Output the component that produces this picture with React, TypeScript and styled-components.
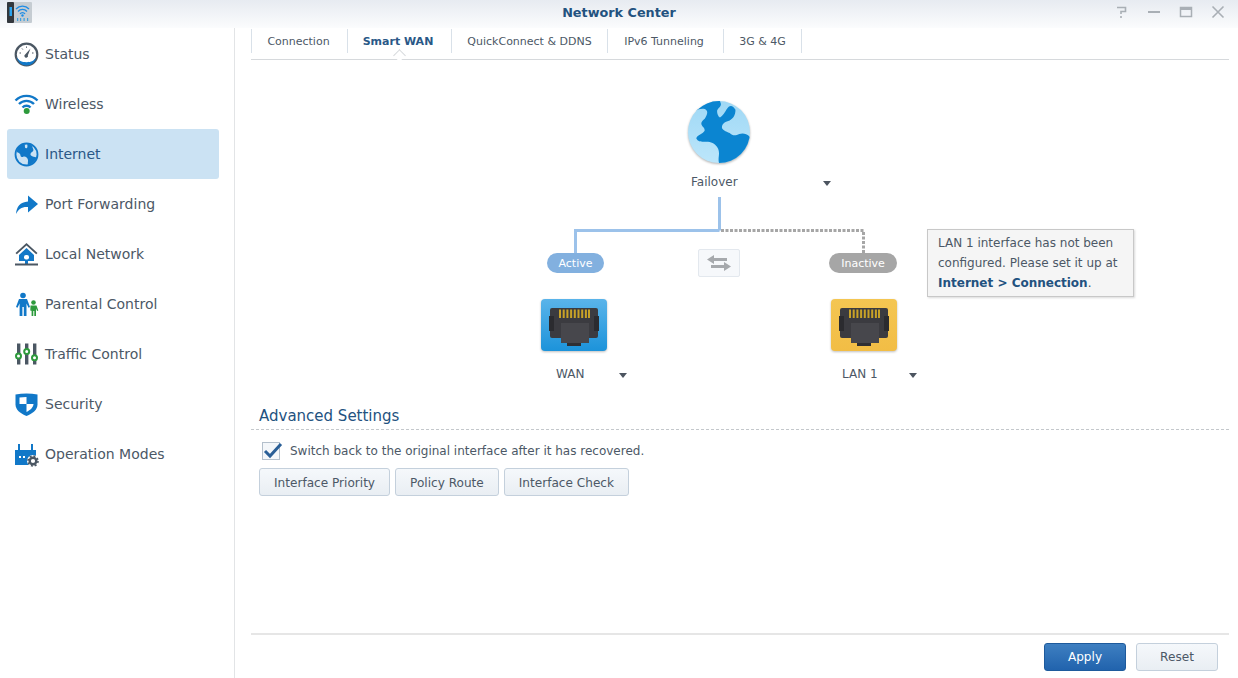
import React from 'react';
import styled, { createGlobalStyle, css } from 'styled-components';

const GlobalStyle = createGlobalStyle`
  html, body {
    margin: 0;
    height: 100%;
    overflow: hidden;
    background: #fff;
  }
  body {
    font-family: "DejaVu Sans", Verdana, sans-serif;
    color: #4c5866;
  }
`;

const Window = styled.div`
  display: flex;
  flex-direction: column;
  width: 1238px;
  height: 678px;
  background: #fff;
`;

const TitleBar = styled.header`
  position: relative;
  display: flex;
  align-items: center;
  justify-content: center;
  flex: none;
  height: 28px;
  background: linear-gradient(#e7ebf1, #fbfcfd);
`;

const AppIcon = styled.svg`
  position: absolute;
  left: 7px;
  top: 2px;
`;

const Title = styled.h1`
  margin: -4px 0 0;
  font-size: 12.8px;
  font-weight: 700;
  color: #23527f;
`;

const WindowControls = styled.div`
  position: absolute;
  right: 13px;
  top: 5px;
  display: flex;
  gap: 18px;
`;

const Body = styled.div`
  display: flex;
  flex: 1;
  min-height: 0;
`;

const Sidebar = styled.nav`
  flex: none;
  width: 235px;
  padding: 1px 15px 0 7px;
  box-sizing: border-box;
  border-right: 1px solid #e2e4e6;
`;

const SideItem = styled.a<{ $active?: boolean }>`
  display: flex;
  align-items: center;
  gap: 6px;
  height: 50px;
  padding-left: 7px;
  border-radius: 3px;
  font-size: 14px;
  color: #4c5866;
  ${(p) =>
    p.$active &&
    css`
      background: #cbe2f3;
      color: #2a5887;
    `}
`;

const SideIcon = styled.svg`
  flex: none;
  width: 25px;
  height: 25px;
`;

const Main = styled.main`
  display: flex;
  flex: 1;
  flex-direction: column;
  min-width: 0;
  padding: 1px 9px 0 16px;
`;

const Tabs = styled.div`
  display: flex;
  flex: none;
  height: 30px;
  border-bottom: 1px solid #d6d9dc;
`;

const Tab = styled.div<{ $width: number; $nudge: number; $active?: boolean }>`
  position: relative;
  display: flex;
  align-items: center;
  justify-content: center;
  width: ${(p) => p.$width}px;
  height: 24px;
  padding-right: ${(p) => p.$nudge}px;
  box-sizing: border-box;
  border-left: 1px solid #d9e1e9;
  font-size: 11px;
  color: ${(p) => (p.$active ? '#2a5887' : '#4c5866')};
  font-weight: ${(p) => (p.$active ? 700 : 400)};
  &:last-child {
    width: ${(p) => p.$width + 1}px;
    border-right: 1px solid #d9e1e9;
  }
  ${(p) =>
    p.$active &&
    css`
      &::after {
        content: '';
        position: absolute;
        left: 50%;
        bottom: -7px;
        width: 8px;
        height: 8px;
        margin-left: -5px;
        background: #fff;
        border-left: 1px solid #d6d9dc;
        border-top: 1px solid #d6d9dc;
        transform: rotate(45deg);
      }
    `}
`;

const Diagram = styled.section`
  position: relative;
  flex: none;
  height: 346px;
`;

const Wires = styled.svg`
  position: absolute;
  left: 0;
  top: 0;
`;

const Globe = styled.svg`
  position: absolute;
  left: 437px;
  top: 41px;
  filter: drop-shadow(0 1px 1px rgba(0, 0, 0, 0.3));
`;

const NodeLabel = styled.div<{ $x: number; $y: number }>`
  position: absolute;
  left: ${(p) => p.$x}px;
  top: ${(p) => p.$y}px;
  font-size: 12px;
  line-height: 16px;
  color: #4c5866;
`;

const Caret = styled.span<{ $x: number; $y: number }>`
  position: absolute;
  left: ${(p) => p.$x}px;
  top: ${(p) => p.$y}px;
  width: 0;
  height: 0;
  border-left: 4.5px solid transparent;
  border-right: 4.5px solid transparent;
  border-top: 5px solid #4c5560;
`;

const Pill = styled.div<{ $x: number; $width: number; $active?: boolean }>`
  position: absolute;
  left: ${(p) => p.$x}px;
  top: 193px;
  width: ${(p) => p.$width}px;
  height: 20px;
  border-radius: 10px;
  background: ${(p) => (p.$active ? '#82b0df' : '#a6a6a6')};
  color: #fff;
  font-size: 11px;
  line-height: 21px;
  text-align: center;
`;

const SwapButton = styled.div`
  position: absolute;
  left: 447px;
  top: 189px;
  display: flex;
  align-items: center;
  justify-content: center;
  width: 40px;
  height: 26px;
  border: 1px solid #e3e8ee;
  border-radius: 2px;
  background: #f6f8fb;
`;

const Port = styled.svg<{ $x: number }>`
  position: absolute;
  left: ${(p) => p.$x}px;
  top: 239px;
  filter: drop-shadow(0 1px 1px rgba(0, 0, 0, 0.25));
`;

const Notice = styled.div`
  position: absolute;
  left: 676px;
  top: 169px;
  width: 207px;
  height: 68px;
  box-sizing: border-box;
  padding: 3px 0 0 10px;
  border: 1px solid #c8c8c8;
  background: #f5f5f5;
  box-shadow: 1px 1px 2px rgba(0, 0, 0, 0.15);
  font-size: 12px;
  line-height: 20px;
  color: #4c5866;
  b {
    color: #23527f;
  }
`;

const SectionTitle = styled.h2`
  margin: 0;
  padding: 0 0 2px 8px;
  border-bottom: 1px dashed #c4c8cc;
  font-size: 15px;
  font-weight: 400;
  line-height: 21px;
  color: #23527f;
`;

const CheckRow = styled.label`
  display: flex;
  align-items: center;
  gap: 10px;
  height: 18px;
  margin: 12px 0 8px 11px;
  font-size: 12px;
`;

const CheckBox = styled.span`
  position: relative;
  flex: none;
  width: 16px;
  height: 16px;
  border: 1px solid #b4c0cc;
  background: #f4f7fa;
  svg {
    position: absolute;
    left: 0;
    top: -3px;
  }
`;

const ButtonRow = styled.div`
  display: flex;
  gap: 5px;
  padding-left: 8px;
`;

const Button = styled.button<{ $primary?: boolean }>`
  height: 28px;
  padding: 1px 14px 0;
  border: 1px solid ${(p) => (p.$primary ? '#1e5a9c' : '#c4d0dc')};
  border-radius: 3px;
  background: ${(p) =>
    p.$primary ? 'linear-gradient(#3e7fc1, #2163ad)' : 'linear-gradient(#f5f8fb, #e9eef3)'};
  color: ${(p) => (p.$primary ? '#fff' : '#4c5866')};
  font-family: inherit;
  font-size: 12.1px;
`;

const Footer = styled.footer`
  display: flex;
  justify-content: flex-end;
  gap: 10px;
  flex: none;
  height: 45px;
  margin-top: auto;
  padding: 8px 11px 0 0;
  box-sizing: border-box;
  border-top: 2px solid #e6e6e6;
  ${Button} {
    width: 82px;
    padding: 0;
  }
`;

const BLUE = '#1178c8';
const GREEN = '#2d9a3c';
const SLATE = '#4b5763';

const StatusIcon = () => (
  <SideIcon viewBox="0 0 25 25">
    <circle cx="12.5" cy="12.5" r="10.8" fill="#fff" stroke={SLATE} strokeWidth="2.2" />
    <path d="M2.6 15a10 10 0 0 0 19.8 0c-2 3.6-5 5.2-9.9 5.2S4.6 18.6 2.6 15z" fill={BLUE} />
    <path d="M16.5 6.5l-2.6 6.8a1.8 1.8 0 1 1-2.5-1z" fill={SLATE} />
    <path d="M5.5 11H7M18 11h1.5M8 6.5l.8 1M12.5 4.5v1.3" stroke={SLATE} strokeWidth="1" />
  </SideIcon>
);

const WifiIcon = () => (
  <SideIcon viewBox="0 0 25 25">
    <g fill="none" stroke={BLUE} strokeWidth="2.4">
      <path d="M1.5 8.5a15.500 15.500 0 0 1 22 0" />
      <path d="M5 12a10.500 10.500 0 0 1 15 0" />
      <path d="M8.500 15.500a5.500 5.500 0 0 1 8 0" />
    </g>
    <circle cx="12.7" cy="19" r="3" fill={GREEN} />
  </SideIcon>
);

const InternetIcon = () => (
  <SideIcon viewBox="0 0 25 25">
    <circle cx="12.5" cy="12.5" r="11" fill="#cbe2f3" stroke={BLUE} strokeWidth="1.8" />
    <path
      d="M8 2.5C5 4 3 7 2.5 10c2 .5 4 1.5 4 3.5 0 1.5 2 2 3 1 2-.5 4 1 4.5 3.5.2 1.5-.5 3 0 5 4-.5 7-3.500 8.500-7.500-2-1-4-.5-5.500-2-1-1-.5-2.500 1-3.500 1-.5 2-1.500 1-3.500C18 3 16 2 13.500 1.700c-.5 1.500.5 3-.5 4.300-1.500 1-2.500-.5-2-2 0-1-1-2-3-1.500z"
      fill={BLUE}
    />
  </SideIcon>
);

const ForwardIcon = () => (
  <SideIcon viewBox="0 0 25 25">
    <path d="M2 22C2.5 15 6 10 14 9.5V3.5l10 8.5-10 8.5V15C8 14.5 4.5 17 2 22z" fill={BLUE} />
  </SideIcon>
);

const LocalNetworkIcon = () => (
  <SideIcon viewBox="0 0 25 25">
    <path d="M12.5 1L1.5 11l1.3 1.3 9.7-8.800 9.700 8.800 1.300-1.300z" fill={SLATE} />
    <path d="M5 13l7.500-7 7.500 7v6H5z" fill={BLUE} />
    <rect x="10" y="13" width="5" height="4.5" rx="2" fill="#fff" />
    <rect x="11" y="19" width="3" height="3" fill={BLUE} />
    <rect x="1" y="21.5" width="23" height="2" fill={SLATE} />
  </SideIcon>
);

const ParentalIcon = () => (
  <SideIcon viewBox="0 0 25 25">
    <circle cx="9" cy="3.5" r="2.8" fill={BLUE} />
    <path d="M5 7h8l3 8-1.500.8-2-4.300V24H9.800v-9H8.400v9H5.600V11.500L3.500 15.800 2 15z" fill={BLUE} />
    <circle cx="19.5" cy="10.5" r="2.3" fill={GREEN} />
    <path d="M16.500 13.500h6l1.800 5-1.200.5-1.100-2.500V24h-1.700v-5h-1v5h-1.700v-7.500L17.500 19l-1.200-.5z" fill={GREEN} />
  </SideIcon>
);

const TrafficIcon = () => (
  <SideIcon viewBox="0 0 25 25">
    <g fill={SLATE}>
      <rect x="3" y="1.5" width="3.4" height="21" />
      <rect x="11" y="1.5" width="3.4" height="21" />
      <rect x="19" y="1.5" width="3.4" height="21" />
    </g>
    <g fill="#fff" stroke={GREEN} strokeWidth="2">
      <circle cx="4.5" cy="14" r="2.5" />
      <circle cx="12.7" cy="9.5" r="2.5" />
      <circle cx="20.5" cy="15.7" r="2.5" />
    </g>
  </SideIcon>
);

const SecurityIcon = () => (
  <SideIcon viewBox="0 0 25 25">
    <path d="M1.5 2.5c7-1.500 15-1.500 22 0v10c0 5-4.500 9-11 11.500C6 21.500 1.500 17.500 1.500 12.500z" fill={BLUE} />
    <path d="M12.5 5c-2.500 0-5 .2-7 .6V12h7zM12.500 12h7c0 3-3 6-7 8z" fill="#fff" />
  </SideIcon>
);

const OperationIcon = () => (
  <SideIcon viewBox="0 0 25 25">
    <path d="M1 8h21v15H1z" fill={BLUE} />
    <rect x="4" y="2" width="2" height="7" fill={BLUE} />
    <rect x="17" y="2" width="2" height="7" fill={BLUE} />
    <rect x="5" y="14" width="2" height="2" fill="#fff" />
    <rect x="9" y="14" width="2" height="2" fill="#fff" />
    <circle cx="19" cy="19" r="6" fill="#fff" />
    <circle cx="19" cy="19" r="3.3" fill="none" stroke={SLATE} strokeWidth="2.4" />
    <circle cx="19" cy="19" r="5" fill="none" stroke={SLATE} strokeWidth="1.6" strokeDasharray="2 1.9" />
  </SideIcon>
);

const navItems = [
  { label: 'Status', icon: <StatusIcon /> },
  { label: 'Wireless', icon: <WifiIcon /> },
  { label: 'Internet', icon: <InternetIcon />, active: true },
  { label: 'Port Forwarding', icon: <ForwardIcon /> },
  { label: 'Local Network', icon: <LocalNetworkIcon /> },
  { label: 'Parental Control', icon: <ParentalIcon /> },
  { label: 'Traffic Control', icon: <TrafficIcon /> },
  { label: 'Security', icon: <SecurityIcon /> },
  { label: 'Operation Modes', icon: <OperationIcon /> },
];

const tabs = [
  { label: 'Connection', width: 96, nudge: 2 },
  { label: 'Smart WAN', width: 104, nudge: 3, active: true },
  { label: 'QuickConnect & DDNS', width: 156, nudge: 0 },
  { label: 'IPv6 Tunneling', width: 116, nudge: 3 },
  { label: '3G & 4G', width: 78, nudge: 0 },
];

const PortGlyph = ({ x, id, top, bottom }: { x: number; id: string; top: string; bottom: string }) => (
  <Port $x={x} width="66" height="54" viewBox="0 0 66 54">
    <defs>
      <linearGradient id={id} x1="0" y1="0" x2="0" y2="1">
        <stop offset="0" stopColor={top} />
        <stop offset="1" stopColor={bottom} />
      </linearGradient>
    </defs>
    <rect width="66" height="52" rx="4" fill={`url(#${id})`} />
    <rect x="9" y="9" width="48" height="30" rx="2" fill="#3b3b40" />
    <rect x="8" y="17" width="5" height="15" fill="#2b2b2f" />
    <rect x="53" y="17" width="5" height="15" fill="#2b2b2f" />
    <rect x="20" y="24" width="28" height="20" fill="#47474c" />
    <rect x="26" y="44" width="14" height="3" fill="#2f2f33" />
    {[18, 21.7, 25.4, 29.1, 32.8, 36.5, 40.2, 43.9, 47].map((px) => (
      <rect key={px} x={px} y="10.5" width="2" height="8.5" fill="#c9a227" />
    ))}
  </Port>
);

const App = () => (
  <Window>
    <GlobalStyle />
    <TitleBar>
      <AppIcon width="25" height="21" viewBox="0 0 25 21">
        <rect width="25" height="21" rx="1" fill="#c5ccd2" />
        <rect width="7" height="21" rx="1" fill="#33383d" />
        <rect x="2.5" y="5" width="2.5" height="9" fill="#2aa3ee" />
        <g fill="none" stroke="#1d8ce6" strokeWidth="1.3">
          <path d="M9 7a9 9 0 0 1 13 0" />
          <path d="M11 9.5a6 6 0 0 1 9 0" />
          <path d="M13 12a3 3 0 0 1 5 0" />
        </g>
        <circle cx="15.5" cy="13.5" r="1.2" fill="#1d8ce6" />
        <g fill="#3fa0dd">
          <rect x="10" y="16" width="1.2" height="3" />
          <rect x="13" y="16" width="1.2" height="3" />
          <rect x="16.5" y="16" width="1.2" height="3" />
          <rect x="20" y="16" width="1.2" height="3" />
        </g>
      </AppIcon>
      <Title>Network Center</Title>
      <WindowControls>
        <svg width="14" height="14" viewBox="0 0 14 14" fill="none" stroke="#a9afb5" strokeWidth="1.6">
          <path d="M2 2.5h8.5v4H6V9" />
          <path d="M6 11v2" />
        </svg>
        <svg width="14" height="14" viewBox="0 0 14 14" fill="#a9afb5">
          <rect x="1" y="6" width="12" height="2" />
        </svg>
        <svg width="14" height="14" viewBox="0 0 14 14" fill="none" stroke="#a9afb5">
          <rect x="1.5" y="2.5" width="11" height="9" strokeWidth="1.5" />
          <rect x="1" y="2" width="12" height="3" fill="#a9afb5" stroke="none" />
        </svg>
        <svg width="14" height="14" viewBox="0 0 14 14" fill="none" stroke="#a9afb5" strokeWidth="1.6">
          <path d="M1.5 1.5l11 11M12.5 1.5l-11 11" />
        </svg>
      </WindowControls>
    </TitleBar>
    <Body>
      <Sidebar>
        {navItems.map((item) => (
          <SideItem key={item.label} $active={item.active}>
            {item.icon}
            {item.label}
          </SideItem>
        ))}
      </Sidebar>
      <Main>
        <Tabs>
          {tabs.map((tab) => (
            <Tab key={tab.label} $width={tab.width} $nudge={tab.nudge} $active={tab.active}>
              {tab.label}
            </Tab>
          ))}
        </Tabs>
        <Diagram>
          <Wires width="978" height="346" viewBox="0 0 978 346" fill="none">
            <path d="M468.5 137V170.5M468.5 170.5H324.5V193" stroke="#9cc2ea" strokeWidth="3" />
            <path d="M470 170.5H612.5V193" stroke="#a6a6a6" strokeWidth="3" strokeDasharray="3 1.5" />
          </Wires>
          <Globe width="62" height="64" viewBox="0 0 64 66">
            <defs>
              <clipPath id="globeClip">
                <circle cx="32" cy="32" r="32" />
              </clipPath>
              <linearGradient id="sea" x1="0" y1="0" x2="0" y2="1">
                <stop offset="0" stopColor="#9fd8f5" />
                <stop offset="1" stopColor="#bce6fb" />
              </linearGradient>
            </defs>
            <circle cx="32" cy="32" r="32" fill="url(#sea)" />
            <path
              clipPath="url(#globeClip)"
              fill="#0b85d1"
              d="M10 0L8 10C11 8 17 7 19 9.5C21 12 19 15 17.5 18C15 20 13 22 14 24.5C15 27 18 28 17 31C15 34 10 35 8.5 38.5C10 42 13 42 16 42C20 42 25 42 28 45C31 48 32 50 32 54C32 58 31 60 32 64L64 64L64 37C60 33 56 33 53 34C49 36 46 36 43 33C39 31 35 30 35 27C35 23 39 21 43 20C47 18 49 14 49 9C47 5 44 4 42 6C39 9 37 15 33 17C31 16 30 13 30 10C31 7 34 6 34 3L33 0z"
            />
          </Globe>
          <NodeLabel $x={440} $y={114}>Failover</NodeLabel>
          <Caret $x={572} $y={121} />
          <Pill $x={296} $width={57} $active>Active</Pill>
          <SwapButton>
            <svg width="24" height="16" viewBox="0 0 24 16" fill="#a6a9ad">
              <path d="M0 4.5L7 0v3h13v3H7v3zM24 11.5L17 7v3H4v3h13v3z" />
            </svg>
          </SwapButton>
          <Pill $x={578} $width={68}>Inactive</Pill>
          <PortGlyph x={290} id="wanTile" top="#5ab4ea" bottom="#1c93da" />
          <PortGlyph x={580} id="lanTile" top="#f4c652" bottom="#f2bd45" />
          <NodeLabel $x={305} $y={306}>WAN</NodeLabel>
          <Caret $x={368} $y={313} />
          <NodeLabel $x={591} $y={306}>LAN 1</NodeLabel>
          <Caret $x={658} $y={313} />
          <Notice>
            LAN 1 interface has not been configured. Please set it up at <b>Internet &gt; Connection</b>.
          </Notice>
        </Diagram>
        <SectionTitle>Advanced Settings</SectionTitle>
        <CheckRow>
          <CheckBox>
            <svg width="20" height="20" viewBox="0 0 20 20" fill="none" stroke="#2a5f97" strokeWidth="3">
              <path d="M2 11l5 5L18 4" />
            </svg>
          </CheckBox>
          Switch back to the original interface after it has recovered.
        </CheckRow>
        <ButtonRow>
          <Button>Interface Priority</Button>
          <Button>Policy Route</Button>
          <Button>Interface Check</Button>
        </ButtonRow>
        <Footer>
          <Button $primary>Apply</Button>
          <Button>Reset</Button>
        </Footer>
      </Main>
    </Body>
  </Window>
);

export default App;
